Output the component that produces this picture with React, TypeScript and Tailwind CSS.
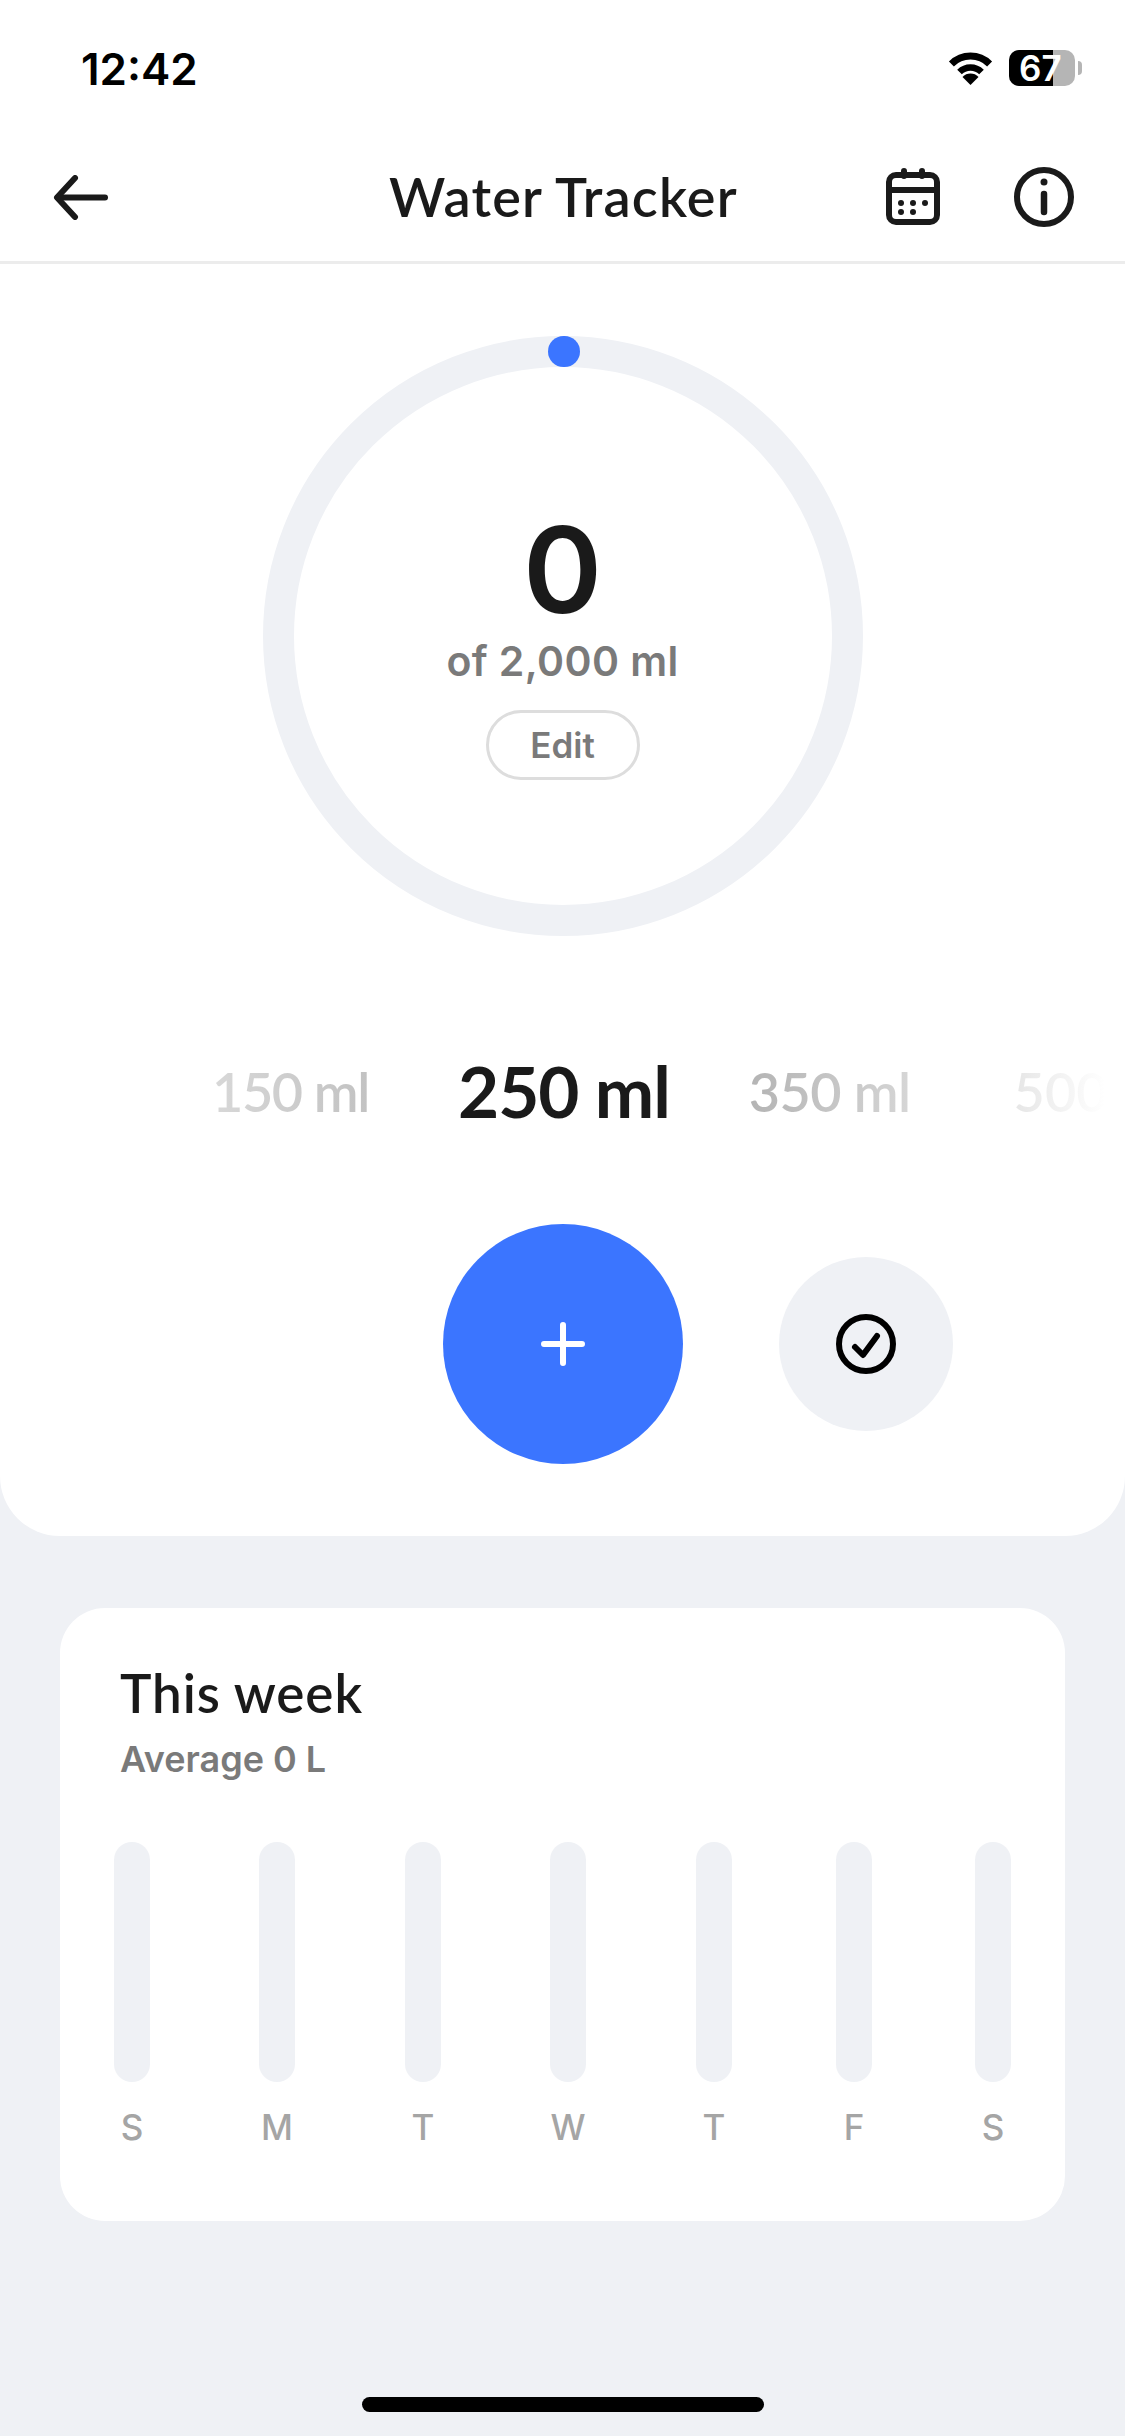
const days = [
  { label: 'S', gap: '' },
  { label: 'M', gap: 'ml-[109px]' },
  { label: 'T', gap: 'ml-[110px]' },
  { label: 'W', gap: 'ml-[109px]' },
  { label: 'T', gap: 'ml-[110px]' },
  { label: 'F', gap: 'ml-[104px]' },
  { label: 'S', gap: 'ml-[103px]' },
];

function StatusBar() {
  return (
    <div className="flex h-[167px] items-start justify-between bg-white pl-[81px] pr-[43px] pt-[46px]">
      <span className="font-['Inter',sans-serif] text-[44px] font-semibold leading-[46px] text-black">12:42</span>
      <div className="flex items-center gap-[16px] pt-[4px]">
        <svg width="45" height="33" viewBox="0 0 45 33" fill="none">
          <path d="M3.4 12A27 27 0 0 1 41.6 12" stroke="#000" strokeWidth="7" />
          <path d="M11.5 20A15.5 15.5 0 0 1 33.5 20" stroke="#000" strokeWidth="6.5" />
          <path d="M22.5 33L14.5 25A11 11 0 0 1 30.5 25Z" fill="#000" />
        </svg>
        <div className="flex items-center gap-[3px]">
          <div className="relative flex h-[36px] w-[66px] items-center overflow-hidden rounded-[10px] bg-[#b5b5b5]">
            <div className="absolute inset-y-0 left-0 w-[44px] bg-black" />
            <span className="relative ml-[10px] font-['Inter',sans-serif] text-[35px] font-semibold leading-none text-white">67</span>
          </div>
          <div className="h-[14px] w-[4px] rounded-r-full bg-[#b5b5b5]" />
        </div>
      </div>
    </div>
  );
}

function Header() {
  return (
    <div className="grid h-[97px] grid-cols-[1fr_auto_1fr] items-center border-b-[3px] border-[#ececec] bg-white pb-[34px] pl-[53px] pr-[51px]">
      <svg width="56" height="45" viewBox="0 0 56 45" fill="none" stroke="#1a1a1a" strokeWidth="6" strokeLinecap="round" strokeLinejoin="round">
        <path d="M22 3L4 22.5L22 42" />
        <path d="M5 22.5H52" />
      </svg>
      <h1 className="font-['Lato',sans-serif] text-[54px] font-semibold leading-none tracking-[1.2px] text-[#1a1a1a]">Water Tracker</h1>
      <div className="flex items-center justify-end gap-[73px]">
        <svg width="56" height="58" viewBox="0 0 56 58" fill="none">
          <rect x="4" y="7" width="48" height="47" rx="7" stroke="#1a1a1a" strokeWidth="6" />
          <path d="M4 22H52" stroke="#1a1a1a" strokeWidth="6" />
          <path d="M19 3V8M37 3V8" stroke="#1a1a1a" strokeWidth="6" strokeLinecap="round" />
          <g fill="#1a1a1a">
            <circle cx="16" cy="35" r="3" />
            <circle cx="28" cy="35" r="3" />
            <circle cx="40" cy="35" r="3" />
            <circle cx="16" cy="44" r="3" />
            <circle cx="28" cy="44" r="3" />
          </g>
        </svg>
        <svg width="60" height="60" viewBox="0 0 60 60" fill="none" stroke="#1a1a1a">
          <circle cx="30" cy="30" r="27" strokeWidth="6" />
          <path d="M30 27V45" strokeWidth="6.5" strokeLinecap="round" />
          <circle cx="30" cy="15" r="3.5" fill="#1a1a1a" stroke="none" />
        </svg>
      </div>
    </div>
  );
}

function Ring() {
  return (
    <div className="relative flex h-[600px] w-[600px] flex-col items-center rounded-full border-[31px] border-[#eff1f5] pt-[143px]">
      <div className="absolute left-[254px] top-[-31px] h-[31px] w-[32px] rounded-full bg-[#3b75ff]" />
      <span className="font-['Inter',sans-serif] text-[120px] font-semibold leading-[120px] text-[#1a1a1a]">0</span>
      <span className="mt-[6px] font-['Inter',sans-serif] text-[41px] font-semibold leading-[50px] tracking-[0.4px] text-[#7a7a7a]">of 2,000 ml</span>
      <div className="mt-[24px] flex h-[70px] w-[154px] items-center justify-center rounded-full border-[3px] border-[#dddddd] font-['Inter',sans-serif] text-[35px] font-semibold text-[#7a7a7a]">Edit</div>
    </div>
  );
}

function AmountPicker() {
  return (
    <div className="mt-[120px] flex h-[70px] w-[1110px] items-center self-start overflow-hidden pl-[212px] font-['Lato',sans-serif]">
      <span className="shrink-0 bg-linear-to-r from-[#d8d8d8] to-[#c2c2c2] bg-clip-text text-[54px] font-semibold tracking-[-1.4px] text-transparent">150 ml</span>
      <span className="ml-[89px] shrink-0 text-[71px] font-bold tracking-[-1px] text-[#1a1a1a]">250 ml</span>
      <span className="ml-[79px] shrink-0 bg-linear-to-r from-[#b4b4b4] to-[#d6d6d6] bg-clip-text text-[54px] font-semibold tracking-[-0.6px] text-transparent">350 ml</span>
      <span className="ml-[103px] shrink-0 bg-linear-to-r from-[#e6e6e6] to-white to-55% bg-clip-text text-[54px] font-semibold text-transparent">500 ml</span>
    </div>
  );
}

function Actions() {
  return (
    <div className="mt-[98px] flex w-full items-center gap-[96px] pl-[443px]">
      <button className="flex h-[240px] w-[240px] items-center justify-center rounded-full bg-[#3b75ff]">
        <svg width="44" height="44" viewBox="0 0 44 44" fill="none" stroke="#fff" strokeWidth="6" strokeLinecap="round">
          <path d="M22 3V41M3 22H41" />
        </svg>
      </button>
      <button className="flex h-[174px] w-[174px] items-center justify-center rounded-full bg-[#eff1f5]">
        <svg width="60" height="60" viewBox="0 0 60 60" fill="none" stroke="#000" strokeWidth="6" strokeLinecap="round" strokeLinejoin="round">
          <circle cx="30" cy="30" r="27" />
          <path d="M19 33L27 41L41 22" />
        </svg>
      </button>
    </div>
  );
}

function WeekCard() {
  return (
    <div className="mx-[60px] mt-[72px] h-[613px] rounded-[45px] bg-white pl-[54px] pt-[55px]">
      <h2 className="pl-[6px] font-['Lato',sans-serif] text-[53px] font-semibold leading-[60px] tracking-[0.9px] text-[#1a1a1a]">This week</h2>
      <p className="mt-[14px] pl-[6px] font-['Inter',sans-serif] text-[36px] font-semibold leading-[44px] text-[#7a7a7a]">Average 0 L</p>
      <div className="mt-[61px] flex">
        {days.map((day, i) => (
          <div key={i} className={`flex w-[36px] flex-col items-center ${day.gap}`}>
            <div className="h-[240px] w-[36px] rounded-full bg-[#eff1f5]" />
            <span className="mt-[23px] font-['Inter',sans-serif] text-[35px] font-medium leading-[44px] text-[#a5a5a5]">{day.label}</span>
          </div>
        ))}
      </div>
    </div>
  );
}

export default function App() {
  return (
    <div className="relative h-[2436px] w-[1125px] overflow-hidden bg-[#eff1f5]">
      <StatusBar />
      <Header />
      <div className="flex h-[1272px] flex-col items-center rounded-b-[60px] bg-white pt-[72px]">
        <Ring />
        <AmountPicker />
        <Actions />
      </div>
      <WeekCard />
      <div className="absolute bottom-[24px] left-[362px] h-[15px] w-[402px] rounded-full bg-black" />
    </div>
  );
}
